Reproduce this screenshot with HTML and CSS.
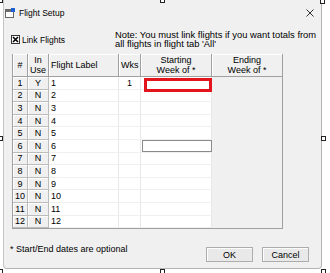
FILE: index.html
```html
<!DOCTYPE html>
<html lang="en">
  <head>
    <meta charset="UTF-8" />
    <title>Flight Setup</title>
    <link rel="stylesheet" href="styles.css">
  </head>
  <body>
    <div class="screen">
      <div class="dialog">
        <div class="titlebar">
          <svg class="appicon" width="10" height="10" viewBox="0 0 10 10">
            <rect x="0.5" y="1.5" width="8" height="8" fill="#fff" stroke="#666" />
            <rect x="1" y="2" width="7" height="2" fill="#6d6d6d" />
            <rect x="6" y="0" width="4" height="4" fill="#1f5fd6" />
          </svg>
          <span class="title">Flight Setup</span>
          <svg class="close" width="8" height="8" viewBox="0 0 8 8">
            <path d="M0.5 0.5 L7.5 7.5 M7.5 0.5 L0.5 7.5" stroke="#333" stroke-width="1" />
          </svg>
        </div>

        <div class="opts">
          <label class="link">
            <svg class="check" width="9" height="9" viewBox="0 0 9 9">
              <rect x="0.5" y="0.5" width="8" height="8" fill="#fff" stroke="#333" />
              <path d="M2 2 L7 7 M7 2 L2 7" stroke="#000" stroke-width="1.6" />
            </svg>
            Link Flights
          </label>
          <p class="note">Note: You must link flights if you want totals from<br />all flights in flight tab 'All'</p>
        </div>

        <div class="grid">
          <div class="hd">#</div>
          <div class="hd">In<br />Use</div>
          <div class="hd left">Flight Label</div>
          <div class="hd left">Wks</div>
          <div class="hd">Starting<br />Week of *</div>
          <div class="hd">Ending<br />Week of *</div>

          <div class="rh">1</div><div class="rh">Y</div><div class="c">1</div><div class="c mid">1</div><div class="c"><span class="mark"></span></div><div class="e"></div>
          <div class="rh">2</div><div class="rh">N</div><div class="c">2</div><div class="c"></div><div class="c"></div><div class="e"></div>
          <div class="rh">3</div><div class="rh">N</div><div class="c">3</div><div class="c"></div><div class="c"></div><div class="e"></div>
          <div class="rh">4</div><div class="rh">N</div><div class="c">4</div><div class="c"></div><div class="c"></div><div class="e"></div>
          <div class="rh">5</div><div class="rh">N</div><div class="c">5</div><div class="c"></div><div class="c"></div><div class="e"></div>
          <div class="rh">6</div><div class="rh">N</div><div class="c">6</div><div class="c"></div><div class="c"><span class="edit"></span></div><div class="e"></div>
          <div class="rh">7</div><div class="rh">N</div><div class="c">7</div><div class="c"></div><div class="c"></div><div class="e"></div>
          <div class="rh">8</div><div class="rh">N</div><div class="c">8</div><div class="c"></div><div class="c"></div><div class="e"></div>
          <div class="rh">9</div><div class="rh">N</div><div class="c">9</div><div class="c"></div><div class="c"></div><div class="e"></div>
          <div class="rh">10</div><div class="rh">N</div><div class="c">10</div><div class="c"></div><div class="c"></div><div class="e"></div>
          <div class="rh">11</div><div class="rh">N</div><div class="c">11</div><div class="c"></div><div class="c"></div><div class="e"></div>
          <div class="rh">12</div><div class="rh">N</div><div class="c">12</div><div class="c"></div><div class="c"></div><div class="e"></div>
        </div>

        <div class="foot">
          <p class="hint">* Start/End dates are optional</p>
          <div class="btns">
            <button class="btn">OK</button>
            <button class="btn">Cancel</button>
          </div>
        </div>
      </div>

      <!-- design-time selection handles -->
      <span class="handle h1"></span>
      <span class="handle h2"></span>
      <span class="handle h3"></span>
      <span class="handle h4"></span>
      <span class="handle h5"></span>
      <span class="handle h6"></span>
      <span class="handle h7"></span>
      <span class="handle h8"></span>
    </div>
  </body>
</html>
```

FILE: styles.css
```css
body {
  margin: 0;
  background-color: #fff;
  font-family: "Liberation Sans", Arial, sans-serif;
  font-size: 9px;
  color: #000;
}
.screen {
  position: relative;
  width: 330px;
  height: 273px;
  overflow: hidden;
}
.dialog {
  margin-left: 3px;
  width: 317px;
  height: 268px;
  background-color: #f0f0f0;
  border-left: 1px solid #c4c4c4;
  border-right: 1px solid #b4b4b4;
  border-bottom: 1px solid #b4b4b4;
  border-radius: 0 0 4px 4px;
  display: flex;
  flex-direction: column;
}
.titlebar {
  height: 26px;
  display: flex;
  align-items: center;
  padding-left: 1px;
}
.appicon {
  margin-right: 4px;
}
.title {
  font-size: 8.5px;
}
.close {
  margin-left: auto;
  margin-right: 7px;
}
.opts {
  height: 28px;
  display: flex;
  padding-left: 7px;
}
.link {
  width: 104px;
  height: 11px;
  margin-top: 8px;
  display: flex;
  align-items: center;
  font-size: 8.5px;
}
.check {
  margin-right: 2px;
}
.note {
  margin: 3.5px 0 0 0;
  font-size: 9.4px;
  line-height: 9.5px;
  white-space: nowrap;
}
.grid {
  margin-left: 8px;
  width: 269px;
  border-left: 1px solid #a0a0a0;
  border-right: 1px solid #a0a0a0;
  border-bottom: 1px solid #a0a0a0;
  display: grid;
  grid-template-columns: 15px 21px 70px 22px 71px 70px;
  grid-template-rows: 23px;
  grid-auto-rows: 12.6px;
}
.hd {
  display: flex;
  align-items: center;
  justify-content: center;
  text-align: center;
  line-height: 10px;
  background-color: #f0f0f0;
  border-right: 1px solid #a0a0a0;
  border-bottom: 1px solid #a0a0a0;
  box-shadow: inset 1px 1px 0 #fff;
}
.hd.left {
  justify-content: flex-start;
  padding-left: 2px;
}
.hd:nth-child(6) {
  border-right: none;
}
.rh {
  display: flex;
  align-items: center;
  justify-content: center;
  background-color: #f0f0f0;
  border-right: 1px solid #bcbcbc;
  border-bottom: 1px solid #bcbcbc;
  box-shadow: inset 1px 1px 0 #fff;
}
.c {
  position: relative;
  display: flex;
  align-items: center;
  padding-left: 2px;
  background-color: #fff;
  border-right: 1px solid #e8e8e8;
  border-bottom: 1px solid #f0f0f0;
}
.c.mid {
  justify-content: center;
  padding-left: 0;
}
.mark {
  position: absolute;
  left: 3px;
  right: -1px;
  top: 1px;
  height: 14px;
  box-sizing: border-box;
  border: 3px solid #e3141c;
  z-index: 1;
}
.edit {
  position: absolute;
  left: 1px;
  right: -1px;
  top: 0;
  bottom: 0;
  box-sizing: border-box;
  border: 1px solid #8a8a8a;
  background-color: #fff;
}
.foot {
  display: flex;
  align-items: flex-start;
  padding: 0 12px 0 6px;
  margin-top: 15px;
}
.hint {
  flex: 1;
  margin: 0;
  line-height: 10px;
}
.btns {
  display: flex;
  gap: 9px;
  margin-top: 3px;
}
.btn {
  width: 47px;
  height: 15px;
  padding: 0;
  font-family: "Liberation Sans", Arial, sans-serif;
  font-size: 9px;
  color: #000;
  background-color: #e9e9e9;
  border: 1px solid #adadad;
  box-shadow: inset 1px 1px 0 #fdfdfd;
}
.handle {
  position: absolute;
  width: 3px;
  height: 3px;
  background-color: #fff;
  border: 1px solid #222;
}
.h1 { left: -2px; top: -2px; }
.h2 { left: 160px; top: -2px; }
.h3 { left: 320px; top: -1px; }
.h4 { left: -2px; top: 136px; }
.h5 { left: 321px; top: 136px; }
.h6 { left: -2px; top: 269px; }
.h7 { left: 160px; top: 269px; }
.h8 { left: 321px; top: 269px; }
```
